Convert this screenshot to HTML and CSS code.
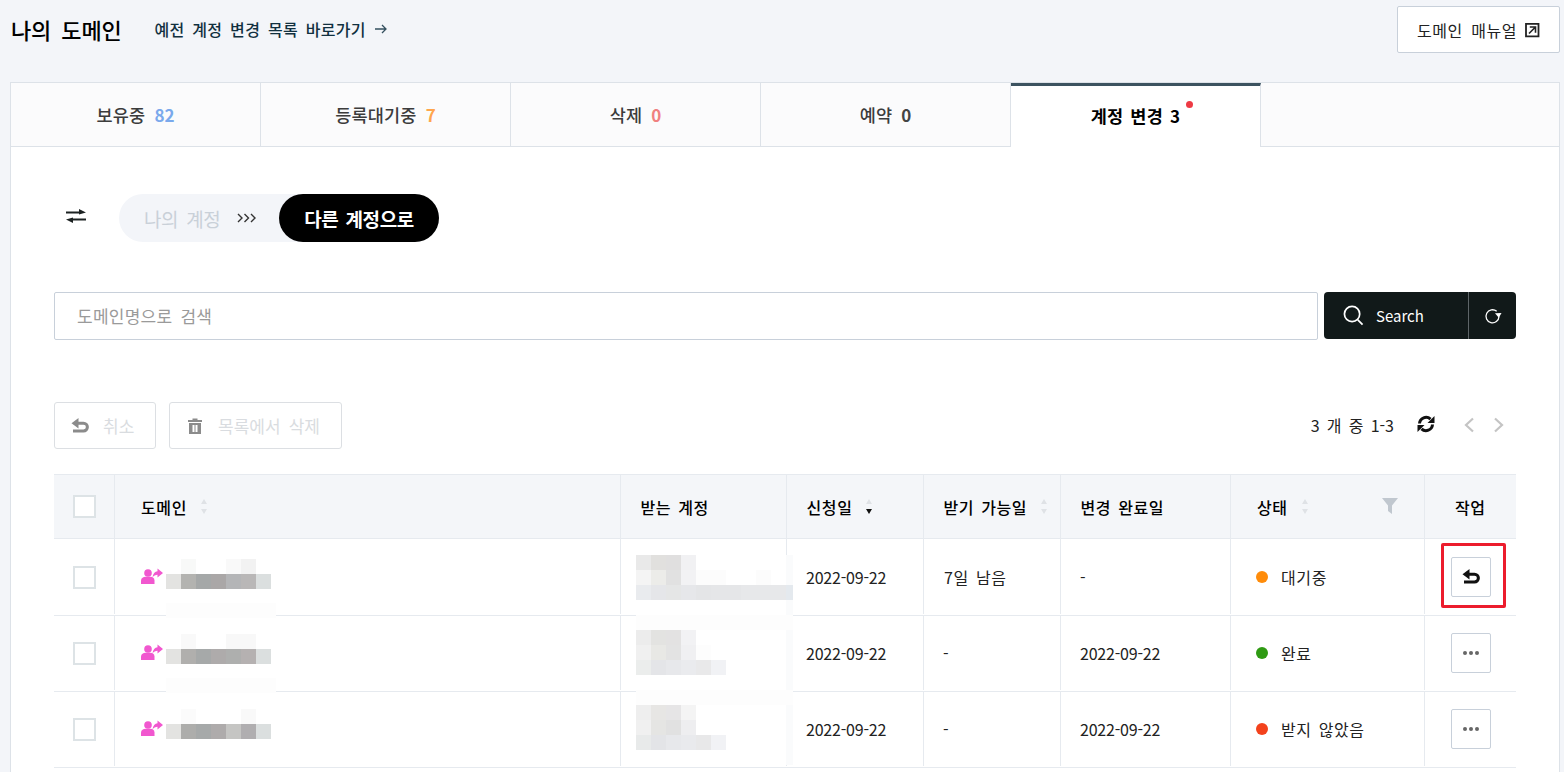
FILE: index.html
```html
<!DOCTYPE html>
<html lang="ko">
<head>
<meta charset="utf-8">
<title>나의 도메인</title>
<link rel="stylesheet" href="styles.css">
</head>
<body>
<header class="top">
  <div class="top-left">
    <h1 class="title">나의 도메인</h1>
    <a class="old-link">예전 계정 변경 목록 바로가기 <svg class="arrow" viewBox="0 0 14 12" width="14" height="12"><path d="M1 6h11M8 2l4 4-4 4" fill="none" stroke="#34505f" stroke-width="1.3"/></svg></a>
  </div>
  <button class="manual">도메인 매뉴얼
    <svg viewBox="0 0 16 16" width="16" height="16"><path d="M2 1.800h12.500v12.500H2z" fill="none" stroke="#222" stroke-width="1.800"/><path d="M5 11.500l6-6M5.800 5h5.700v5.700" fill="none" stroke="#222" stroke-width="1.600"/></svg>
  </button>
</header>

<main class="panel">
  <nav class="tabs">
    <div class="tab">보유중 <b class="n-blue">82</b></div>
    <div class="tab">등록대기중 <b class="n-orange">7</b></div>
    <div class="tab">삭제 <b class="n-red">0</b></div>
    <div class="tab">예약 <b class="n-gray">0</b></div>
    <div class="tab active"><span class="tab-label">계정 변경 <span class="tab-num">3</span><i class="dot"></i></span></div>
    <div class="tab-rest"></div>
  </nav>

  <section class="body">
    <div class="switch-row">
      <svg class="swap" viewBox="0 0 20 14" width="20" height="14"><path d="M0 3.500h15M20 10.500H5" fill="none" stroke="#1c2222" stroke-width="2"/><path d="M13 0L20 3.500 13 5.500zM7 8.500L0 10.500l7 3.500z" fill="#1c2222"/></svg>
      <div class="pill">
        <span class="pill-off">나의 계정</span>
        <svg class="chev" viewBox="0 0 20 10" width="20" height="10"><path d="M1 1l4 4-4 4M7.500 1l4 4-4 4M14 1l4 4-4 4" fill="none" stroke="#333" stroke-width="1.400"/></svg>
        <span class="pill-on">다른 계정으로</span>
      </div>
    </div>

    <div class="search-row">
      <div class="search-input">도메인명으로 검색</div>
      <div class="search-btn">
        <span class="search-go">
          <svg viewBox="0 0 22 22" width="21" height="21"><circle cx="9.500" cy="9.500" r="8" fill="none" stroke="#fff" stroke-width="1.800"/><path d="M15.500 15.500l5 5" stroke="#fff" stroke-width="1.800"/></svg>
          Search
        </span>
        <span class="search-reset">
          <svg viewBox="0 0 18 18" width="18" height="18"><path d="M15 9.500a6.500 6.500 0 1 1-2.300-5.200" fill="none" stroke="#fff" stroke-width="1.300"/><path d="M17.500 6l-6.500.3 3.800 4.500z" fill="#fff"/></svg>
        </span>
      </div>
    </div>

    <div class="tools">
      <div class="tools-left">
        <div class="tool tool-cancel">
          <svg viewBox="0 0 18 16" width="18" height="16"><path d="M5 5.200h7.500a3.900 3.900 0 0 1 0 7.800H2" fill="none" stroke="#8b8b8b" stroke-width="3"/><path d="M7.500 0L0.500 5.200l7 5.200z" fill="#8b8b8b"/></svg>
          <span>취소</span>
        </div>
        <div class="tool tool-del">
          <svg viewBox="0 0 14 16" width="14" height="16"><path d="M0 2h4.500V.5h5V2H14v2H0zM1 5h12v11H1zM4.500 7v7H6.500V7zM7.500 7v7h2V7z" fill="#8b8b8b" fill-rule="evenodd"/></svg>
          <span>목록에서 삭제</span>
        </div>
      </div>
      <div class="pager">
        <span class="count">3 개 중 1-3</span>
        <svg class="sync" viewBox="0 0 20 18" width="20" height="18"><path d="M3.500 8.500A6.500 6.500 0 0 1 14.500 4.200" fill="none" stroke="#111" stroke-width="3"/><path d="M18.500 1v7h-7z" fill="#111"/><path d="M16.500 9.500A6.500 6.500 0 0 1 5.500 13.800" fill="none" stroke="#111" stroke-width="3"/><path d="M1.500 17v-7h7z" fill="#111"/></svg>
        <svg class="pg-prev" viewBox="0 0 12 16" width="12" height="16"><path d="M10 1.500L3 8l7 6.500" fill="none" stroke="#c4c4c4" stroke-width="2.200"/></svg>
        <svg class="pg-next" viewBox="0 0 12 16" width="12" height="16"><path d="M2 1.500L9 8l-7 6.500" fill="none" stroke="#c4c4c4" stroke-width="2.200"/></svg>
      </div>
    </div>

    <div class="table">
      <div class="thead">
        <div class="th th-check"><span class="check"></span></div>
        <div class="th th-domain"><span>도메인</span><span class="sort"><i class="up"></i><i class="down"></i></span></div>
        <div class="th th-acct"><span>받는 계정</span></div>
        <div class="th"><span>신청일</span><span class="sort"><i class="up"></i><i class="down on"></i></span></div>
        <div class="th"><span>받기 가능일</span><span class="sort"><i class="up"></i><i class="down"></i></span></div>
        <div class="th"><span>변경 완료일</span></div>
        <div class="th th-state"><span>상태</span><span class="sort"><i class="up"></i><i class="down"></i></span>
          <svg class="filter" viewBox="0 0 16 16" width="16" height="16"><path d="M0 0h16L10 7.500V16l-4-3V7.500z" fill="#c0c7cf"/></svg>
        </div>
        <div class="th th-act"><span>작업</span></div>
      </div>

      <div class="tr tr-first">
        <div class="td td-check"><span class="check"></span></div>
        <div class="td td-domain">
          <svg class="user" viewBox="0 0 22 16" width="22" height="16"><use href="#u"/></svg>
          <svg class="mosaic m-domain" viewBox="0 0 110 59" width="110" height="59">
            <rect x="15" width="15" height="15" fill="#f8f9f8"/><rect x="60" width="15" height="15" fill="#f9f9f9"/><rect x="75" width="15" height="15" fill="#f2f2f2"/>
            <rect y="15" width="15" height="15" fill="#e3e3e1"/><rect x="15" y="15" width="15" height="15" fill="#b3b3b0"/><rect x="30" y="15" width="15" height="15" fill="#a5a8a8"/><rect x="45" y="15" width="15" height="15" fill="#aaa7a7"/><rect x="60" y="15" width="15" height="15" fill="#b4b5b7"/><rect x="75" y="15" width="15" height="15" fill="#b9b7b7"/><rect x="90" y="15" width="15" height="15" fill="#dbdfdf"/>
            <rect y="44" width="110" height="15" fill="#fdfdfd"/>
          </svg>
        </div>
        <div class="td td-acct">
          <svg class="mosaic m-acct" viewBox="0 0 157 75" width="157" height="75">
            <rect width="15" height="15" fill="#e9e9e9"/><rect x="15" width="15" height="15" fill="#e1e0de"/><rect x="30" width="15" height="15" fill="#e0dfdf"/><rect x="45" width="15" height="15" fill="#f1f1f3"/>
            <rect y="15" width="15" height="15" fill="#f4f4f4"/><rect x="15" y="15" width="15" height="15" fill="#ecece9"/><rect x="30" y="15" width="15" height="15" fill="#e1e1e1"/><rect x="45" y="15" width="15" height="15" fill="#f2f2f4"/><rect x="60" y="15" width="30" height="15" fill="#fcfcfc"/><rect x="120" y="15" width="15" height="15" fill="#fcfcfc"/>
            <rect y="30" width="15" height="15" fill="#e9ebee"/><rect x="15" y="30" width="15" height="15" fill="#e5e6e9"/><rect x="30" y="30" width="15" height="15" fill="#e5e6e6"/><rect x="45" y="30" width="15" height="15" fill="#e6e7ea"/><rect x="60" y="30" width="15" height="15" fill="#e4e5e7"/><rect x="75" y="30" width="30" height="15" fill="#e5e6e8"/><rect x="105" y="30" width="45" height="15" fill="#e7e8ea"/><rect x="150" y="30" width="7" height="15" fill="#e4e9ee"/>
            <rect y="60" width="157" height="15" fill="#fdfdfd"/>
          </svg>
        </div>
        <div class="td date">2022-09-22</div>
        <div class="td">7일 남음</div>
        <div class="td date">-</div>
        <div class="td td-state"><i class="st st-wait"></i>대기중</div>
        <div class="td td-act">
          <button class="act"><svg viewBox="0 0 18 16" width="18" height="16"><path d="M5 5.200h7.500a3.900 3.900 0 0 1 0 7.800H2" fill="none" stroke="#111" stroke-width="3"/><path d="M7.500 0L0.500 5.200l7 5.200z" fill="#111"/></svg></button>
          <span class="mark"></span>
        </div>
      </div>

      <div class="tr tr-second">
        <div class="td td-check"><span class="check"></span></div>
        <div class="td td-domain">
          <svg class="user" viewBox="0 0 22 16" width="22" height="16"><use href="#u"/></svg>
          <svg class="mosaic m-domain" viewBox="0 0 110 59" width="110" height="59">
            <rect x="15" width="15" height="15" fill="#f9f9f9"/><rect x="60" width="30" height="15" fill="#f8f8f8"/>
            <rect y="15" width="15" height="15" fill="#e3e3e1"/><rect x="15" y="15" width="15" height="15" fill="#b0afad"/><rect x="30" y="15" width="15" height="15" fill="#a6a9a9"/><rect x="45" y="15" width="15" height="15" fill="#aeabab"/><rect x="60" y="15" width="15" height="15" fill="#aeafae"/><rect x="75" y="15" width="15" height="15" fill="#b5b1b1"/><rect x="90" y="15" width="15" height="15" fill="#dbdfdf"/>
            <rect y="44" width="110" height="15" fill="#fdfdfd"/>
          </svg>
        </div>
        <div class="td td-acct">
          <svg class="mosaic m-acct" viewBox="0 0 157 75" width="157" height="75">
            <rect width="15" height="15" fill="#ececec"/><rect x="15" width="15" height="15" fill="#e3e3e1"/><rect x="30" width="15" height="15" fill="#e3e2e2"/><rect x="45" width="15" height="15" fill="#f2f2f4"/>
            <rect y="15" width="15" height="15" fill="#f0f0f0"/><rect x="15" y="15" width="15" height="15" fill="#e8e8e5"/><rect x="30" y="15" width="15" height="15" fill="#e3e3e3"/><rect x="45" y="15" width="15" height="15" fill="#f0f0f2"/><rect x="60" y="15" width="15" height="15" fill="#fdfdfd"/>
            <rect y="30" width="15" height="15" fill="#ebedec"/><rect x="15" y="30" width="15" height="15" fill="#e4e5e8"/><rect x="30" y="30" width="15" height="15" fill="#e7e8eb"/><rect x="45" y="30" width="15" height="15" fill="#eaebee"/><rect x="60" y="30" width="15" height="15" fill="#e9e9ea"/><rect x="75" y="30" width="15" height="15" fill="#f1f2f5"/>
            <rect y="60" width="157" height="15" fill="#fdfdfd"/>
          </svg>
        </div>
        <div class="td date">2022-09-22</div>
        <div class="td date">-</div>
        <div class="td date">2022-09-22</div>
        <div class="td td-state"><i class="st st-done"></i>완료</div>
        <div class="td td-act"><button class="act"><i class="dots"></i></button></div>
      </div>

      <div class="tr tr-third">
        <div class="td td-check"><span class="check"></span></div>
        <div class="td td-domain">
          <svg class="user" viewBox="0 0 22 16" width="22" height="16"><use href="#u"/></svg>
          <svg class="mosaic m-domain" viewBox="0 0 110 59" width="110" height="59">
            <rect x="15" width="15" height="15" fill="#fbfbfb"/><rect x="75" width="15" height="15" fill="#f9f9f9"/>
            <rect y="15" width="15" height="15" fill="#e3e3e1"/><rect x="15" y="15" width="15" height="15" fill="#adadab"/><rect x="30" y="15" width="15" height="15" fill="#a6a9a9"/><rect x="45" y="15" width="15" height="15" fill="#aeabab"/><rect x="60" y="15" width="15" height="15" fill="#c5c5c3"/><rect x="75" y="15" width="15" height="15" fill="#b0aeb0"/><rect x="90" y="15" width="15" height="15" fill="#dbdfdf"/>
          </svg>
        </div>
        <div class="td td-acct">
          <svg class="mosaic m-acct" viewBox="0 0 157 75" width="157" height="75">
            <rect width="15" height="15" fill="#eeeeee"/><rect x="15" width="15" height="15" fill="#e7e6e4"/><rect x="30" width="15" height="15" fill="#e6e5e6"/><rect x="45" width="15" height="15" fill="#f4f4f4"/>
            <rect y="15" width="15" height="15" fill="#f0f0f0"/><rect x="15" y="15" width="15" height="15" fill="#e5e5e3"/><rect x="30" y="15" width="15" height="15" fill="#e1e1e1"/><rect x="45" y="15" width="15" height="15" fill="#eeeef0"/>
            <rect y="30" width="15" height="15" fill="#e8eaea"/><rect x="15" y="30" width="15" height="15" fill="#e3e4e7"/><rect x="30" y="30" width="15" height="15" fill="#e7e8eb"/><rect x="45" y="30" width="15" height="15" fill="#e9eaed"/><rect x="60" y="30" width="15" height="15" fill="#e8e8e9"/><rect x="75" y="30" width="15" height="15" fill="#f1f2f5"/>
          </svg>
        </div>
        <div class="td date">2022-09-22</div>
        <div class="td date">-</div>
        <div class="td date">2022-09-22</div>
        <div class="td td-state"><i class="st st-rej"></i>받지 않았음</div>
        <div class="td td-act"><button class="act"><i class="dots"></i></button></div>
      </div>
      <span class="acct-band"></span>
    </div>
  </section>
</main>

<svg class="defs" width="0" height="0"><defs><g id="u"><circle cx="7" cy="5" r="3.800" fill="#f157cf"/><path d="M0 16v-3.500C0 10 2.500 8.800 4.500 8.800h5c2 0 4 1.200 4 3.700V16z" fill="#f157cf"/><path d="M11.500 9.500c.4-3.800 2.400-5.800 5-6.200V.5L22 5l-5.500 4.500V6.800c-2 0-3.800 1-5 2.700z" fill="#f157cf"/></g></defs></svg>
</body>
</html>
```
FILE: styles.css
```css
* { box-sizing: border-box; }
html, body { margin: 0; height: 772px; overflow: hidden; }
body {
  background: #f3f5f9;
  font-family: "Noto Sans CJK KR", "Noto Sans", sans-serif;
  color: #111;
  padding: 0 4px 0 10px;
}
button { font-family: inherit; }
i { display: block; }

.top { height: 82px; display: flex; justify-content: space-between; align-items: flex-start; }
.top-left { display: flex; align-items: center; height: 58px; padding-left: 1px; }
.title { margin: -1px 0 0; font-size: 22px; font-weight: 500; letter-spacing: -0.200px; word-spacing: 4.300px; color: #000; }
.old-link { margin-left: 33px; font-size: 16px; font-weight: 500; color: #11303f; letter-spacing: 0.300px; word-spacing: 3px; display: flex; align-items: center; white-space: pre; }
.manual {
  margin-top: 6px; width: 163px; height: 47px; background: #fff;
  border: 1px solid #c8d0da; border-radius: 2px;
  font-size: 16px; letter-spacing: 0.500px; word-spacing: 3.700px; color: #222;
  display: flex; align-items: center; justify-content: center; gap: 7px; padding: 0;
}

.panel { background: #fff; border: 1px solid #dde2e8; height: 720px; }
.tabs { display: flex; height: 64px; }
.tab {
  width: 250px; height: 64px; background: #fbfbfc;
  border-right: 1px solid #dde2e8; border-bottom: 1px solid #dde2e8;
  display: flex; align-items: center; justify-content: center; gap: 4px;
  font-size: 17.500px; font-weight: 500; letter-spacing: 0.200px; color: #3c3c3c; white-space: pre;
}
.tab b { font-weight: 700; font-size: 17px; letter-spacing: 0; }
.n-blue { color: #7aa9ec; }
.n-orange { color: #ffa64d; }
.n-red { color: #f08080; }
.n-gray { color: #444; }
.tab.active {
  background: #fff; border-top: 3px solid #3c5360; border-bottom: 0; color: #000; font-weight: 700; padding-bottom: 3px;
}
.tab-label { position: relative; word-spacing: 2px; }
.tab-num { font-size: 17px; }
.dot { position: absolute; right: -13px; top: -2px; width: 7px; height: 7px; border-radius: 50%; background: #ee3a44; }
.tab-rest { flex: 1; background: #fbfbfc; border-bottom: 1px solid #dde2e8; }

.body { padding: 47px 43px 0; }
.switch-row { display: flex; align-items: center; height: 48px; }
.swap { margin-left: 12px; margin-top: -4px; }
.pill { margin-left: 33px; width: 320px; height: 48px; border-radius: 24px; background: #f3f5f9; display: flex; align-items: center; }
.pill-off { margin-left: 25px; font-size: 19px; color: #c9d0d8; letter-spacing: -0.400px; word-spacing: 3.200px; }
.chev { margin-left: 17px; }
.pill-on {
  margin-left: auto; width: 160px; height: 48px; border-radius: 24px; background: #000; color: #fff;
  font-size: 19px; font-weight: 700; display: flex; align-items: center; justify-content: center; letter-spacing: -0.400px; word-spacing: 2.200px;
}

.search-row { display: flex; gap: 6px; margin-top: 50px; height: 48px; }
.search-input {
  flex: 1; border: 1px solid #c8d0da; border-radius: 2px; padding: 0 0 1px 22px;
  display: flex; align-items: center; font-size: 17px; color: #9a9a9a; letter-spacing: 0.260px; word-spacing: 3px;
}
.search-btn { width: 192px; height: 47px; background: #111919; border-radius: 4px; color: #fff; display: flex; }
.search-go { width: 145px; display: flex; align-items: center; gap: 12px; padding-left: 19px; font-size: 15px; border-right: 1px solid #5e6568; }
.search-reset { flex: 1; display: flex; align-items: center; justify-content: center; }

.tools { display: flex; justify-content: space-between; align-items: center; margin-top: 62px; height: 47px; }
.tools-left { display: flex; gap: 13px; }
.tool {
  height: 47px; background: #fff; border: 1px solid #dcdfe3; border-radius: 3px;
  display: flex; align-items: center; font-size: 17px; color: #d9dce0; letter-spacing: 0.030px; word-spacing: 3.200px;
}
.tool-cancel { width: 102px; padding-left: 16px; gap: 14px; }
.tool-del { width: 173px; padding-left: 18px; gap: 16px; }
.pager { display: flex; align-items: center; padding-right: 11px; height: 47px; margin-top: -1px; }
.count { font-size: 16px; word-spacing: 2.700px; color: #222; }
.sync { margin-left: 22px; margin-top: -2px; }
.pg-prev { margin-left: 27px; }
.pg-next { margin-left: 18px; }

.table { margin-top: 25px; position: relative; }
.thead, .tr { display: grid; grid-template-columns: 60px 506px 166px 137px 137px 170px 194px 92px; }
.thead { height: 65px; background: #f4f6f9; border-top: 1px solid #e6eaef; border-bottom: 1px solid #e6eaef; }
.th {
  display: flex; align-items: center; padding-left: 19.500px; font-size: 16px; font-weight: 500; color: #000;
  letter-spacing: 0.600px; word-spacing: 2px; border-left: 1px solid #e6eaef; position: relative;
}
.th:first-child, .td:first-child { border-left: 0; }
.th-check { padding-left: 19px; }
.th-domain { padding-left: 26px; }
.th-state { padding-left: 26px; }
.th-act { padding-left: 30px; }
.sort { display: flex; flex-direction: column; gap: 5px; margin-left: 14px; }
.up { width: 0; height: 0; border-left: 3px solid transparent; border-right: 3px solid transparent; border-bottom: 5px solid #dfe2e6; }
.down { width: 0; height: 0; border-left: 3px solid transparent; border-right: 3px solid transparent; border-top: 5px solid #dfe2e6; }
.down.on { border-top-color: #111; }
.filter { position: absolute; left: 151px; top: 23px; }

.tr { height: 76px; border-bottom: 1px solid #e6eaef; }
.tr-first { height: 77px; }
.td {
  height: 74px; display: flex; align-items: center; padding-left: 20px; font-size: 16px; color: #222;
  border-left: 1px solid #e6eaef; position: relative; letter-spacing: 0.600px; word-spacing: 2px;
}
.tr-first .td { height: 75px; padding-top: 1px; }
.td.date { letter-spacing: -0.200px; padding-left: 19px; }
.td.td-check { padding-left: 19px; }
.td.td-domain { padding-left: 26px; }
.td.td-state { padding-left: 25px; }
.td.td-act { padding-left: 26px; }
.check { display: block; width: 23px; height: 23px; background: #fff; border: 2px solid #dde3e6; }
.user { margin-top: -3px; }
.mosaic { position: absolute; z-index: 2; }
.m-domain { left: 51px; top: 20px; }
.m-acct { left: 15px; top: 16px; }
.tr-second .m-domain { top: 18px; }
.tr-second .m-acct { top: 14px; }
.tr-third .m-domain { top: 17px; }
.tr-third .m-acct { top: 13px; }
.acct-band { position: absolute; z-index: 1; left: 732px; top: 81px; width: 7px; height: 210px; background: #fafbfc; }
.st { width: 12px; height: 12px; border-radius: 50%; margin-right: 13px; margin-top: -1px; }
.st-wait { background: #ff8c0a; }
.st-done { background: #2f9a13; }
.st-rej { background: #f3421c; }
.act {
  width: 40px; height: 40px; background: #fff; border: 1px solid #c8d0da; border-radius: 2px; padding: 0;
  display: flex; align-items: center; justify-content: center; position: relative; z-index: 1;
}
.dots { width: 4px; height: 4px; border-radius: 50%; background: #666; box-shadow: -6px 0 0 #666, 6px 0 0 #666; }
.mark { position: absolute; left: 16px; top: 4px; width: 65px; height: 65px; border: 3px solid #ec1c2d; border-radius: 2px; }
.defs { position: absolute; }
```
